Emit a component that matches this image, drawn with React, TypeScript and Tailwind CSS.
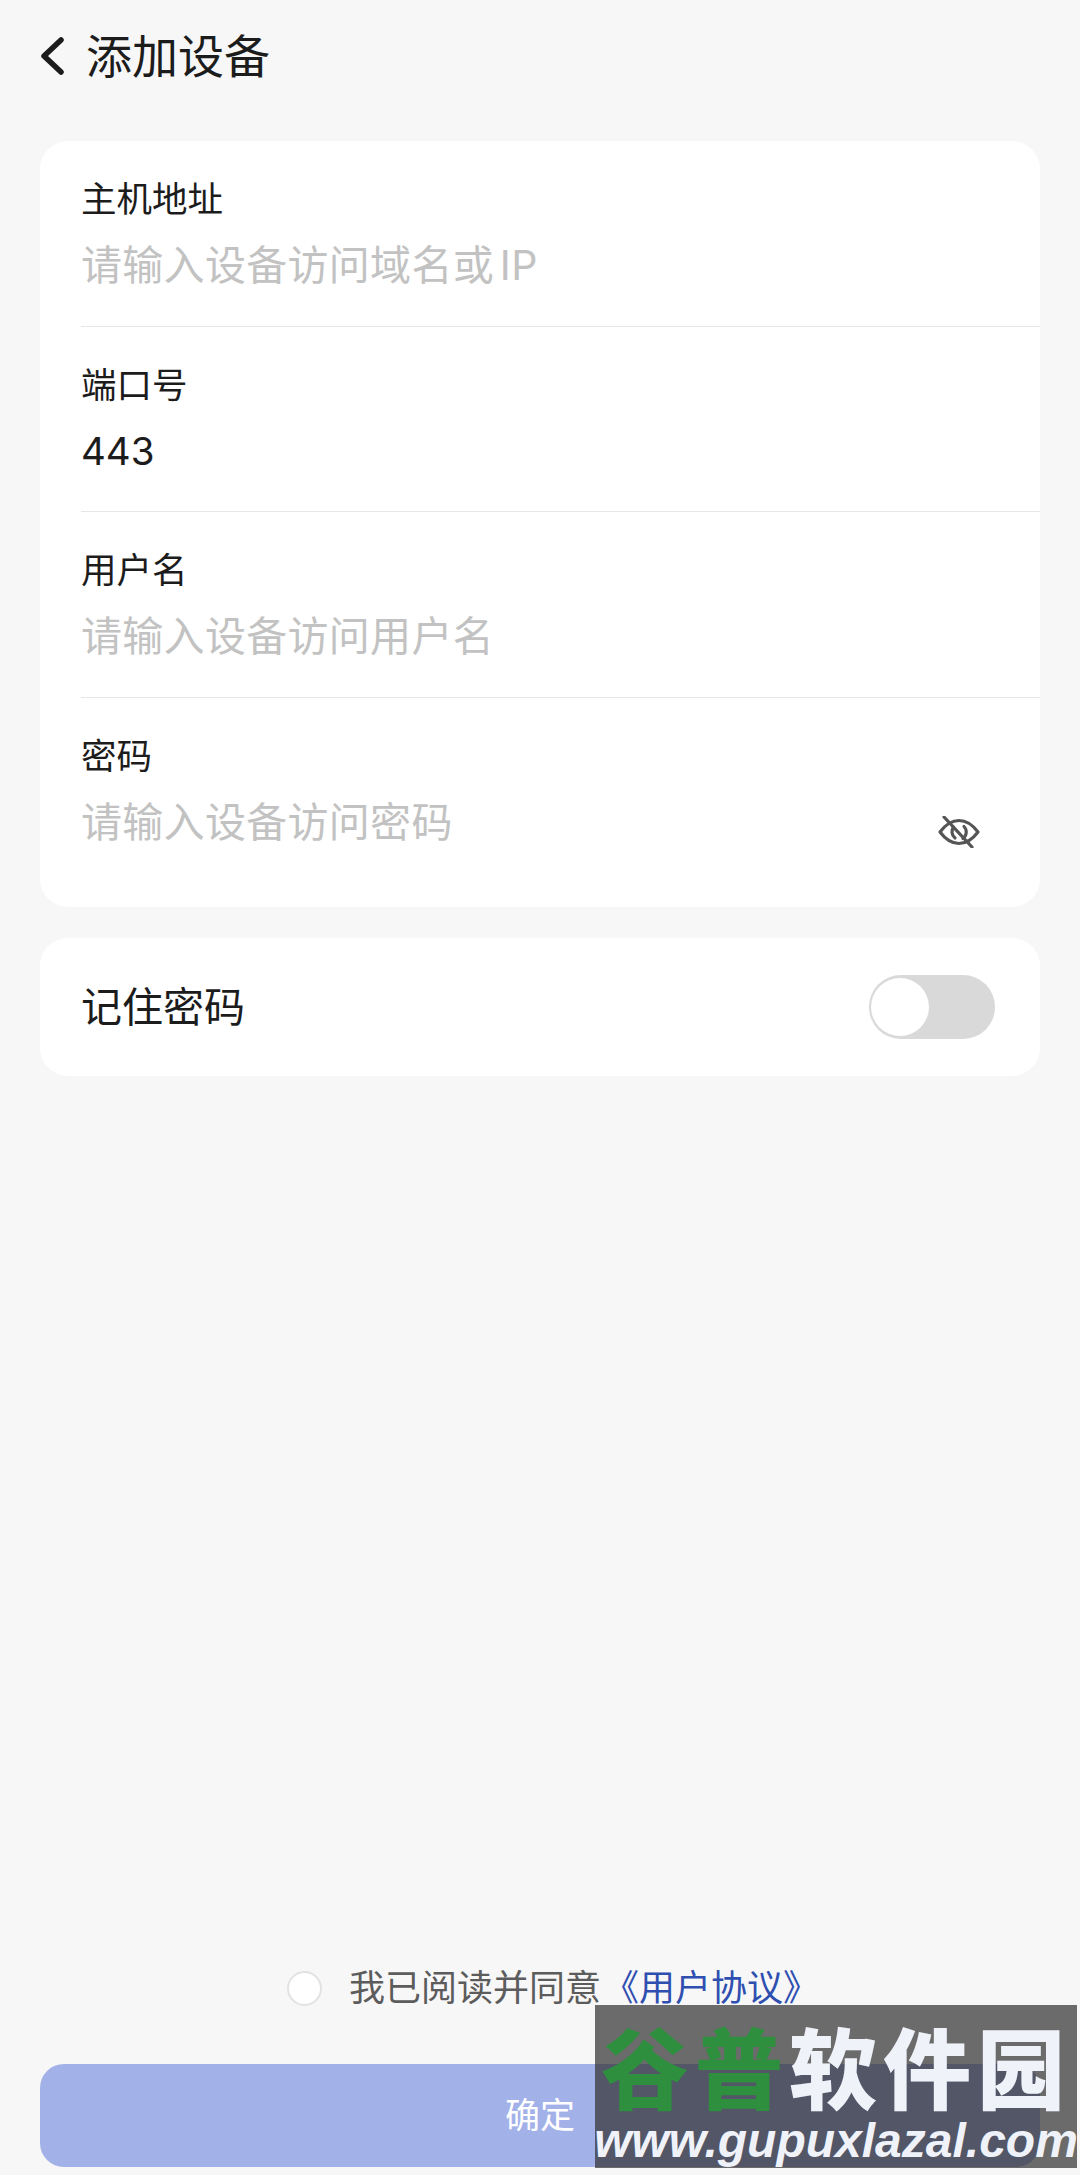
import React from 'react';

const CJK = '[font-family:Inter,"Noto_Sans_CJK_SC",sans-serif]';

const fields = [
  { label: '主机地址', placeholder: '请输入设备访问域名或 IP' },
  { label: '端口号', value: '443' },
  { label: '用户名', placeholder: '请输入设备访问用户名' },
  { label: '密码', placeholder: '请输入设备访问密码', secret: true },
];

const EyeOff = () => (
  <svg width="42" height="32" viewBox="0 0 42 32" fill="none" stroke="#555" strokeWidth="3.2" strokeLinecap="round" strokeLinejoin="round">
    <path d="M2 16 C8 8 14 4.5 21 4.5 C28 4.5 34 8 40 16 C34 24 28 27.5 21 27.5 C14 27.5 8 24 2 16 Z" />
    <path d="M26 10.5 A8 8 0 0 1 25 22.5 M17 22 A8 8 0 0 1 15.5 11" />
    <path d="M6 1 L34 31" />
  </svg>
);

export default function App() {
  return (
    <div className={`relative flex h-[2175px] w-[1080px] flex-col overflow-hidden bg-[#f7f7f7] ${CJK}`}>
      <header className="flex h-[113px] items-center pb-[2px] pl-[40px]">
        <svg width="26" height="38" viewBox="0 0 26 38" fill="none" stroke="#1c1c1c" strokeWidth="5.5" strokeLinecap="round" strokeLinejoin="round">
          <path d="M21 3 L4 19 L21 35" />
        </svg>
        <h1 className="ml-[20px] text-[46px] leading-[56px] font-normal text-[#1c1c1c]">添加设备</h1>
      </header>

      <div className="mx-[40px] mt-[28px] h-[766px] rounded-[28px] bg-white">
        {fields.map((f, i) => (
          <div key={f.label} className={`relative ml-[41px] h-[185.5px] pt-[39px] ${i < 3 ? 'border-b-[1.5px] border-[#e6e6e6]' : ''}`}>
            <div className="text-[35.5px] leading-[40px] text-[#1c1c1c]">{f.label}</div>
            {f.value ? (
              <div className="mt-[25px] text-[38.5px] leading-[40px] text-[#1c1c1c]">{f.value}</div>
            ) : (
              <div className="mt-[25px] text-[41px] leading-[40px] tracking-[0.3px] text-[#c2c2c2] [word-spacing:-6px]">{f.placeholder}</div>
            )}
            {f.secret && (
              <div className="absolute top-[118px] left-[857px]">
                <EyeOff />
              </div>
            )}
          </div>
        ))}
      </div>

      <div className="mx-[40px] mt-[31px] flex h-[138px] items-center justify-between rounded-[28px] bg-white pr-[45px] pl-[41px]">
        <span className="text-[41px] leading-[48px] text-[#1c1c1c]">记住密码</span>
        <div className="flex h-[64px] w-[126px] items-center rounded-full bg-[#d9d9d9] p-[2px]">
          <div className="h-[58px] w-[58px] rounded-full bg-white" />
        </div>
      </div>

      <div className="mt-auto flex items-center justify-center pl-[26px]">
        <div className="h-[35px] w-[35px] rounded-full border-2 border-[#e2e2e2] bg-white" />
        <span className="ml-[27px] text-[36px] leading-[44px] text-[#5c5c5c]">我已阅读并同意</span>
        <span className="ml-[2px] text-[36px] leading-[44px] text-[#2f4fb0]">《用户协议》</span>
      </div>

      <button className="mx-[40px] mt-[54px] mb-[8px] flex h-[103px] items-center justify-center rounded-[24px] bg-[#a3b1e9] text-[35px] text-white">
        确定
      </button>

      <div className="absolute top-[2005px] left-[595px] flex h-[163px] w-[482px] flex-col items-center overflow-hidden bg-[#2f2f2f]/70">
        <div className="mt-[18px] flex text-[88px] leading-[94px] font-black tracking-[6px]">
          <span className="text-[#2e8f3e]">谷普</span>
          <span className="text-[#f0f2fa]">软件园</span>
        </div>
        <div className="mt-[-1px] whitespace-nowrap text-[48px] leading-[50px] font-bold italic text-[#f0f2fa] [font-family:'Liberation_Sans',sans-serif]">
          www.gupuxlazal.com
        </div>
      </div>
    </div>
  );
}
